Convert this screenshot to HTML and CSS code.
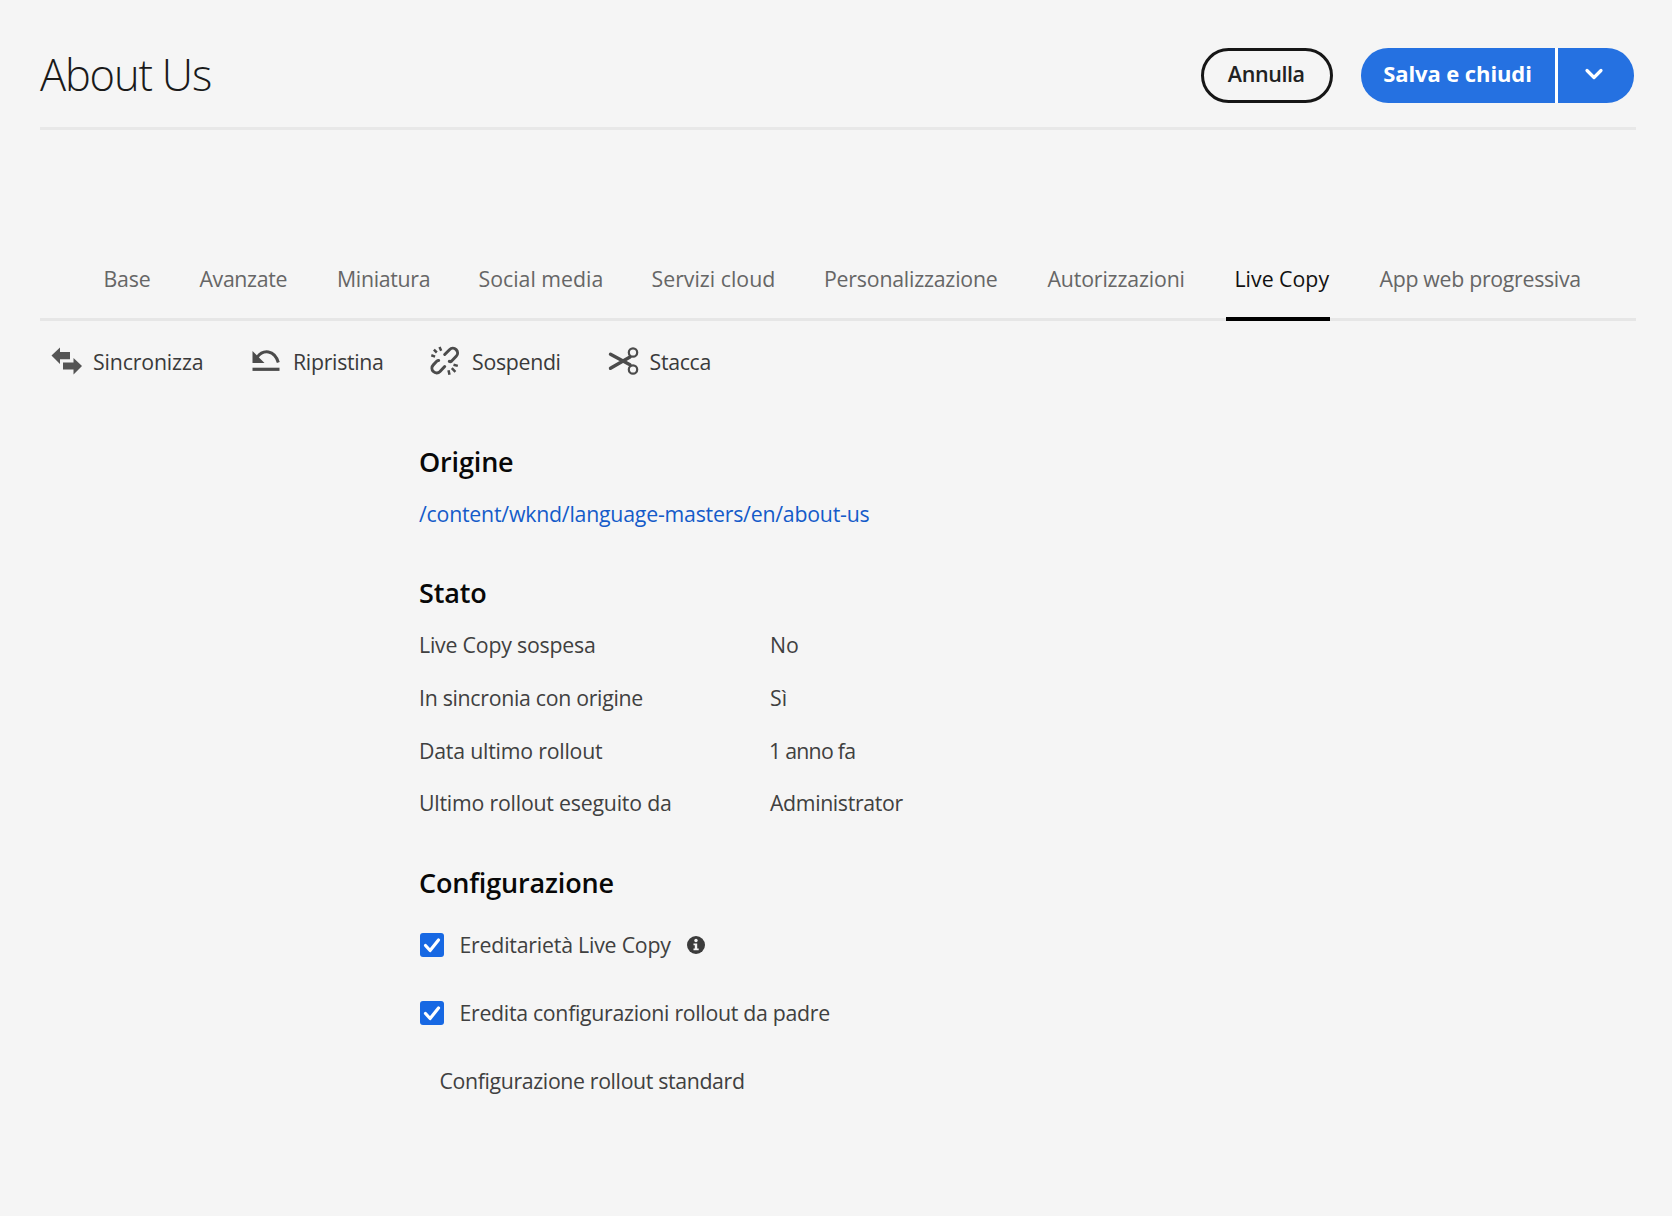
FILE: index.html
```html
<!DOCTYPE html>
<html lang="it">
<head>
<meta charset="utf-8">
<title>About Us</title>
<link rel="stylesheet" href="styles.css">
</head>
<body>
<header class="header">
  <h1 class="title">About Us</h1>
  <div class="actions">
    <button class="btn cancel">Annulla</button>
    <div class="split">
      <button class="btn save">Salva e chiudi</button>
      <button class="btn caret" aria-label="Altro">
        <svg width="20" height="14" viewBox="0 0 20 14"><path d="M3 3.5l7 7 7-7" fill="none" stroke="#fff" stroke-width="3.200" stroke-linecap="round" stroke-linejoin="round"/></svg>
      </button>
    </div>
  </div>
</header>

<nav class="tabs">
  <a class="tab t-sm">Base</a>
  <a class="tab t-xl">Avanzate</a>
  <a class="tab t-lg">Miniatura</a>
  <a class="tab">Social media</a>
  <a class="tab">Servizi cloud</a>
  <a class="tab t-md">Personalizzazione</a>
  <a class="tab t-sm">Autorizzazioni</a>
  <a class="tab active">Live Copy</a>
  <a class="tab t-lg">App web progressiva</a>
</nav>

<div class="toolbar">
  <a class="tool">
    <svg class="icon" width="31" height="30" viewBox="0 0 31 30" fill="#555"><path d="M.5 9.500L9 1.500V6h10v7.300H9V18z"/><path d="M31 20l-8.500-8v4.600H12v7h10.500V28.500z"/></svg>
    <span class="t-sm">Sincronizza</span>
  </a>
  <a class="tool">
    <svg class="icon" width="31" height="30" viewBox="0 0 31 30"><path d="M1.500 5v12h12z" fill="#4b4b4b"/><path d="M6 11.500C12 3 23.500 3.500 27.300 16.500" fill="none" stroke="#4b4b4b" stroke-width="3"/><path d="M1.500 23.300h27" stroke="#4b4b4b" stroke-width="3.200"/></svg>
    <span class="t-lg">Ripristina</span>
  </a>
  <a class="tool">
    <svg class="icon" width="31" height="30" viewBox="0 0 31 30" fill="none" stroke="#4b4b4b"><g stroke-width="3" stroke-linecap="round"><path d="M14.700 8.500l4.800-4.800a4.700 4.700 0 0 1 6.700 6.600l-4.500 4.700q-1.200 1-2.400.4"/><path d="M14.700 20.500l-4.700 5a4.700 4.700 0 0 1-6.700-6.600l3.400-3.600q1-1 2-.9"/></g><path stroke-width="2.500" d="M9.500 1l1.700 3.800M3.900 3.600l2.900 2.900M1.300 9.300l3.800 1.300M23.500 18.700l4.300 1.200M21.800 22.200l3.600 3.600M18.500 24.300l1 4.400"/></svg>
    <span class="t-lg">Sospendi</span>
  </a>
  <a class="tool">
    <svg class="icon" width="31" height="30" viewBox="0 0 31 30" fill="none" stroke="#4b4b4b"><path d="M2.500 8.200L22 18.700M2.500 22.300L22 11" stroke-width="3.400" stroke-linecap="round"/><circle cx="25" cy="6.500" r="4.200" stroke-width="2.200"/><circle cx="25" cy="23.500" r="4.200" stroke-width="2.200"/></svg>
    <span class="t-lg">Stacca</span>
  </a>
</div>

<main class="content">
  <h2 class="heading">Origine</h2>
  <a class="link">/content/wknd/language-masters/en/about-us</a>

  <h2 class="heading status">Stato</h2>
  <dl class="facts">
    <dt class="t-md">Live Copy sospesa</dt><dd>No</dd>
    <dt class="t-lg">In sincronia con origine</dt><dd>Sì</dd>
    <dt class="t-md">Data ultimo rollout</dt><dd class="t-date">1 anno fa</dd>
    <dt class="t-md">Ultimo rollout eseguito da</dt><dd class="t-xl">Administrator</dd>
  </dl>

  <h2 class="heading config">Configurazione</h2>
  <label class="option">
    <svg class="check" width="24" height="24" viewBox="0 0 24 24"><rect width="24" height="24" rx="3" fill="#1768e3"/><path d="M5.500 12.500l4.600 5L18.500 7" fill="none" stroke="#fff" stroke-width="3.200" stroke-linecap="round" stroke-linejoin="round"/></svg>
    <span class="t-md">Ereditarietà Live Copy</span>
    <svg class="info" width="18" height="18" viewBox="0 0 18 18"><circle cx="9" cy="9" r="9" fill="#3c3c3c"/><circle cx="9" cy="4.500" r="1.700" fill="#f5f5f5"/><path d="M6.500 7.500h3.700v5h1.500v1.700H6.500v-1.700h1.300V9.200H6.500z" fill="#f5f5f5"/></svg>
  </label>
  <label class="option">
    <svg class="check" width="24" height="24" viewBox="0 0 24 24"><rect width="24" height="24" rx="3" fill="#1768e3"/><path d="M5.500 12.500l4.600 5L18.500 7" fill="none" stroke="#fff" stroke-width="3.200" stroke-linecap="round" stroke-linejoin="round"/></svg>
    <span class="t-lg">Eredita configurazioni rollout da padre</span>
  </label>
  <div class="option standard t-xl">Configurazione rollout standard</div>
</main>
</body>
</html>
```
FILE: styles.css
```css
* { box-sizing: border-box; }

body {
  margin: 0;
  padding: 48px 36px 0 40px;
  min-height: 1216px;
  background: #f5f5f5;
  color: #404040;
  font-family: "Open Sans", "Noto Sans", sans-serif;
  font-size: 21.3px;
  white-space: nowrap;
}

h1, h2, dl, dd { margin: 0; }

/* letter spacing steps */
.t-sm { letter-spacing: -0.15px; }
.t-md { letter-spacing: -0.21px; }
.t-lg { letter-spacing: -0.3px; }
.t-xl { letter-spacing: -0.36px; }
.t-date { letter-spacing: -0.75px; text-indent: -1px; }

/* header */
.header {
  display: flex;
  justify-content: space-between;
  align-items: flex-start;
  height: 82px;
  padding-right: 2px;
  border-bottom: 3px solid #e8e8e8;
}
.title {
  font-size: 43.5px;
  font-weight: 300;
  line-height: 54px;
  letter-spacing: -1.2px;
  color: #1a1a1a;
}
.actions { display: flex; gap: 28px; }
.split { display: flex; gap: 3px; background: linear-gradient(#fff, #fff) 193px 0 / 5px 100% no-repeat; }
.btn {
  display: flex;
  align-items: center;
  justify-content: center;
  height: 54.5px;
  padding: 0 0 3px;
  border: 0;
  font: 600 21.5px "Open Sans", "Noto Sans", sans-serif;
  color: #fff;
  background: #2571e1;
}
.cancel {
  width: 132.5px;
  padding-right: 1px;
  border: 3px solid #161616;
  border-radius: 28px;
  background: none;
  color: #222;
  letter-spacing: -0.4px;
}
.save {
  width: 194px;
  padding: 0 1px 4.5px 0;
  border-radius: 27.25px 0 0 27.25px;
  font-size: 22px;
  font-weight: 700;
  letter-spacing: -0.09px;
}
.caret {
  width: 76px;
  padding-right: 4px;
  border-radius: 0 27.25px 27.25px 0;
}

/* tabs */
.tabs {
  display: grid;
  grid-template-columns: 96px 137.5px 141.5px 173px 172.5px 223.500px 185.5px 146.5px auto;
  align-items: end;
  height: 190.5px;
  padding-left: 56.5px;
  border-bottom: 3px solid #e6e6e6;
}
.tab {
  padding: 0 0 19px 7px;
  line-height: 40px;
  color: #666;
}
.tab.active {
  width: 104px;
  margin-bottom: -3.5px;
  padding: 0 0 18px 8.5px;
  border-bottom: 4px solid #000;
  color: #111;
}

/* toolbar */
.toolbar {
  display: grid;
  grid-template-columns: 200px 179px 177.5px auto;
  margin-top: 20px;
  padding-left: 11px;
}
.tool {
  display: flex;
  align-items: center;
  gap: 11px;
  line-height: 42px;
  color: #3a3a3a;
}
.icon { flex: none; margin-top: -1px; }

/* content */
.content { padding: 61.5px 0 0 379px; }
.heading {
  font-size: 27px;
  font-weight: 600;
  line-height: 36px;
  letter-spacing: -0.16px;
  color: #080808;
}
.link {
  display: block;
  margin-top: 19px;
  line-height: 30px;
  letter-spacing: -0.22px;
  color: #145bc9;
}
.status { margin-top: 46px; }
.facts {
  display: grid;
  grid-template-columns: 351px auto;
  margin-top: 8px;
  line-height: 52.8px;
}
.config { margin-top: 34.4px; }
.option {
  display: flex;
  align-items: center;
  height: 68px;
}
.config + .option { margin-top: 10px; }
.check { flex: none; margin: 0 16px 0 0.5px; }
.info { margin: 0 0 0 16px; }
.standard { padding-left: 20.5px; }
```
